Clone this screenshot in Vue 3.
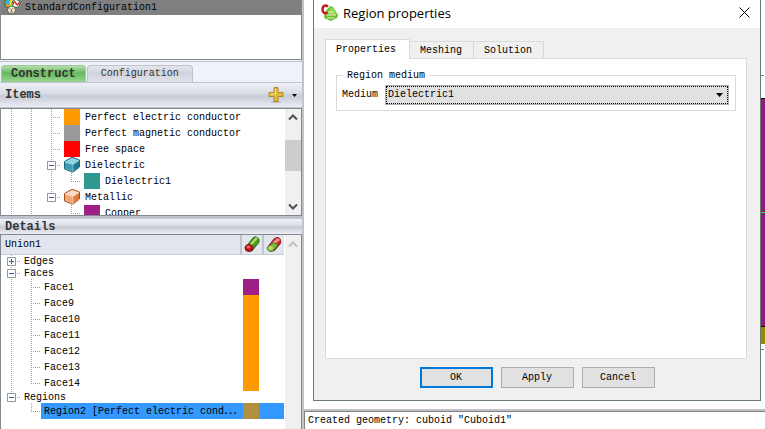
<script setup>
import { ref } from 'vue'

const medium = ref('Dielectric1')

const items = [
  { cells: ['v', 'v', 't'], color: '#ff9900', label: 'Perfect electric conductor' },
  { cells: ['v', 'v', 't'], color: '#999999', label: 'Perfect magnetic conductor' },
  { cells: ['v', 'v', 't'], color: '#ff0000', label: 'Free space' },
  { cells: ['v', 'v', 't'], toggle: '-', cube: 'teal', label: 'Dielectric' },
  { cells: ['v', 'v', 'v', 'l'], color: '#2f9990', label: 'Dielectric1' },
  { cells: ['v', 'v', 'l'], toggle: '-', cube: 'copper', label: 'Metallic' },
  { cells: ['v', 'v', 'n', 'l'], color: '#9e1f86', label: 'Copper' },
]

const details = [
  { cells: ['t'], toggle: '+', label: 'Edges', group: true },
  { cells: ['t'], toggle: '-', label: 'Faces', group: true },
  { cells: ['v', 't'], label: 'Face1', color: '#9e1f86' },
  { cells: ['v', 't'], label: 'Face9', color: '#ff9900' },
  { cells: ['v', 't'], label: 'Face10', color: '#ff9900' },
  { cells: ['v', 't'], label: 'Face11', color: '#ff9900' },
  { cells: ['v', 't'], label: 'Face12', color: '#ff9900' },
  { cells: ['v', 't'], label: 'Face13', color: '#ff9900' },
  { cells: ['v', 'l'], label: 'Face14', color: '#ff9900' },
  { cells: ['l'], toggle: '-', label: 'Regions', group: true },
  { cells: ['n', 'l'], label: 'Region2 [Perfect electric cond', more: true, color: '#b38f40', selected: true },
]
</script>

<template>
  <div class="app">
    <aside class="side">
      <div class="config-list">
        <div class="config-row">
          <svg class="config-icon" width="17" height="15" viewBox="0 0 17 15" aria-hidden="true">
            <path d="M1 0h8v8l-3 1-5-3z" fill="#e8a020" stroke="#2f6b33" />
            <path d="M2 0h3v5l-3-1z" fill="#38b5c8" />
            <path d="M6 0h3v6H6z" fill="#f5d83a" />
            <circle cx="12" cy="3.500" r="4" fill="#fff" stroke="#2e7038" />
            <path d="M9 4.500c1-4 2-3 3-1s2 2 3-1" fill="none" stroke="#d3202c" stroke-width="1.500" />
            <circle cx="7.500" cy="10" r="4" fill="#f7ede0" stroke="#3a6e3c" />
            <path d="M5.500 8l2 2 2-2M7.500 10v2M6 12h3" fill="none" stroke="#c55a48" />
          </svg>
          <span>StandardConfiguration1</span>
        </div>
      </div>

      <div class="side-tabs" role="tablist">
        <button class="side-tab active" role="tab" aria-selected="true">Construct</button>
        <button class="side-tab" role="tab" aria-selected="false">Configuration</button>
      </div>

      <header class="bar items-bar">
        <h2>Items</h2>
        <button class="add" aria-label="Add item">
          <svg width="32" height="18" viewBox="0 0 32 18">
            <ellipse cx="9" cy="16" rx="5" ry="1" fill="#a5a8b2" opacity=".6" />
            <path d="M7 1.500h4v5h5v4h-5v5H7v-5H2v-4h5z" fill="#dfb83e" stroke="#b18a2b" />
            <path d="M8.500 3v5H4" fill="none" stroke="#f7e394" />
            <path d="M25 8h5l-2.500 3z" fill="#000" />
          </svg>
        </button>
      </header>

      <section class="box items-box">
        <div class="tree">
          <div v-for="row in items" :key="row.label" class="row">
            <span v-for="(c, i) in row.cells" :key="i" class="cell" :class="c">
              <button v-if="row.toggle && i === row.cells.length - 1" class="toggle" :aria-label="row.label">
                <svg width="9" height="9" viewBox="0 0 9 9"><path d="M2 4.500h5" stroke="#3b5fae" /></svg>
              </button>
            </span>
            <span v-if="row.color" class="swatch lead" :style="{ background: row.color }"></span>
            <svg v-else class="lead" width="16" height="16" viewBox="0 0 16 16" :class="row.cube" aria-hidden="true">
              <path class="top" d="M.5 4.500L7 .8l2-.3 6.500 2.500v7L9.500 14.800l-1.500.2-7.500-3z" />
              <path class="front" d="M1 5l8 2.500v7l-8-3z" />
              <path class="edge" d="M9 7.500l6-4V10l-6 4.500z" />
              <path class="shine" d="M1 5l8 2.500 6-4M9 7.500v7" />
            </svg>
            <span class="label">{{ row.label }}</span>
          </div>
        </div>
        <div class="scroll">
          <svg width="16" height="16" viewBox="0 0 16 16"><path d="M4 10.500L8 6.500l4 4" /></svg>
          <span class="thumb"></span>
          <svg class="down" width="16" height="16" viewBox="0 0 16 16"><path d="M4 5.500l4 4 4-4" /></svg>
        </div>
      </section>

      <header class="bar details-bar"><h2>Details</h2></header>

      <section class="box details-box">
        <div class="tree">
          <div class="head">
            <span class="head-name">Union1</span>
            <span class="head-icon">
              <svg width="16" height="17" viewBox="0 0 16 17" aria-hidden="true">
                <path d="M1 12L9 2c2-2 4-1 5 0s1 2 1 4L8 15z" fill="#4f9a20" stroke="#2c6417" />
                <path d="M6 8l5-6c1-1 2-1 3 0L8 9z" fill="#b5de68" />
                <ellipse cx="5" cy="12" rx="4" ry="3.500" fill="#b81418" stroke="#7d1010" />
                <ellipse cx="4.500" cy="11" rx="2" ry="1.500" fill="#ee6a60" />
              </svg>
            </span>
            <span class="head-icon">
              <svg width="16" height="17" viewBox="0 0 16 17" aria-hidden="true">
                <path d="M1 12L8 3c2-2 5-2 6 0s1 3 0 5l-6 7z" fill="#c8232b" stroke="#8c181c" />
                <path d="M5 8l5-5c1-1 3-1 4 1L8 9z" fill="#f68b84" />
                <path d="M1 12l6-5c3 0 5 1 4 3l-4 5c-3 1-5 0-6-3z" fill="#7cba3c" stroke="#477f20" />
                <ellipse cx="4.500" cy="12" rx="2.500" ry="2" fill="#b5e26e" />
              </svg>
            </span>
          </div>
          <div
            v-for="row in details"
            :key="row.label"
            class="row"
            :class="{ group: row.group, selected: row.selected }"
          >
            <span v-for="(c, i) in row.cells" :key="i" class="cell" :class="c">
              <button v-if="row.toggle && i === row.cells.length - 1" class="toggle" :aria-label="row.label">
                <svg width="9" height="9" viewBox="0 0 9 9">
                  <path :d="row.toggle === '+' ? 'M2 4.5h5M4.5 2v5' : 'M2 4.5h5'" stroke="#3b5fae" />
                </svg>
              </button>
            </span>
            <span class="fill">
              <span class="name">{{ row.label }}<span v-if="row.more" class="more">…</span></span>
              <span v-if="row.color" class="swatch mark" :style="{ background: row.color }"></span>
            </span>
          </div>
        </div>
        <div class="scroll idle">
          <svg width="16" height="18" viewBox="0 0 16 18"><path d="M4 11.500L8 7.500l4 4" /></svg>
        </div>
      </section>
    </aside>

    <main class="main">
      <div class="stage">
        <section class="dialog" role="dialog" aria-labelledby="dialog-title">
          <header class="title">
            <svg width="18" height="18" viewBox="0 0 18 18" aria-hidden="true">
              <path d="M9 2l3 1 5 8-1 3-6 3-7-3 1-6z" fill="#68bd2d" />
              <path d="M9 3l3 1 4 7H7z" fill="#91d84d" />
              <path d="M7 8h6M5 11h10M6 14h8" stroke="#e7f7c9" stroke-width="1.200" />
              <path d="M7 2.500C4 .5 1.500 2 1.500 5.500S4 10 6.500 8.500" fill="none" stroke="#c8171e" stroke-width="2.500" />
            </svg>
            <h1 id="dialog-title">Region properties</h1>
            <button class="close" aria-label="Close">
              <svg width="11" height="11" viewBox="0 0 11 11"><path d="M.5.500l10 10M10.500.500l-10 10" /></svg>
            </button>
          </header>

          <div class="dialog-body">
            <div class="tabs" role="tablist">
              <button class="tab active" role="tab" aria-selected="true">Properties</button>
              <button class="tab" role="tab" aria-selected="false">Meshing</button>
              <button class="tab" role="tab" aria-selected="false">Solution</button>
            </div>
            <div class="pane">
              <fieldset>
                <legend>Region medium</legend>
                <label for="medium">Medium</label>
                <div class="combo">
                  <select id="medium" v-model="medium">
                    <option>Dielectric1</option>
                  </select>
                  <svg width="7" height="4" viewBox="0 0 7 4" aria-hidden="true"><path d="M0 0h7L3.500 4z" /></svg>
                </div>
              </fieldset>
            </div>
            <div class="actions">
              <button class="push default">OK</button>
              <button class="push">Apply</button>
              <button class="push">Cancel</button>
            </div>
          </div>
        </section>
        <div class="view">
          <span class="tick upper"></span>
          <span class="solid"></span>
          <span class="solid low"></span>
          <span class="base"></span>
          <span class="tick"></span>
        </div>
      </div>
      <div class="log">Created geometry: cuboid "Cuboid1"</div>
    </main>
  </div>
</template>

<style>
body {
  margin: 0;
}
</style>

<style scoped>
* {
  box-sizing: border-box;
}
.app {
  display: flex;
  min-height: 100vh;
  font: 10px/16px "Liberation Mono", monospace;
  color: #000;
  background: #fff;
}
button,
select {
  font: inherit;
  color: inherit;
  margin: 0;
  padding: 0;
  border: 0;
  border-radius: 0;
  background: none;
}
svg {
  display: block;
  flex: none;
}
h1,
h2 {
  margin: 0;
}

/* side panel */
.side {
  flex: none;
  width: 304px;
  display: flex;
  flex-direction: column;
  background: #eff2fb;
  border-right: 2px solid #c0c3cb;
}
.config-list {
  height: 60px;
  background: #fff;
  border: 1px solid #828790;
  border-top: 0;
}
.config-row {
  display: flex;
  height: 15px;
  padding-left: 3px;
  gap: 4px;
  background: #808080;
}
.side-tabs {
  display: flex;
  gap: 1px;
  margin-top: 1px;
  padding: 3px 1px 0;
  border-top: 1px solid #c0c3cb;
  border-bottom: 1px solid #c0c3cb;
}
.side-tab {
  height: 17px;
  padding: 0 13px;
  color: #333;
  border: 1px solid #bfc2cb;
  border-bottom: 0;
  border-radius: 4px 4px 0 0;
  background: linear-gradient(#e5e7ef, #d0d3dc 45%, #e0e3eb);
}
.side-tab.active {
  padding: 0 9px;
  font-size: 12px;
  font-weight: bold;
  border-color: #9fca98;
  background: linear-gradient(#b4deae, #66b95d 45%, #9cd492);
}
.bar {
  display: flex;
  align-items: center;
  justify-content: space-between;
  padding: 0 3px 0 5px;
  background: linear-gradient(#eef0f7, #dcdee6 40%, #c8cbd5 55%, #eceef5);
}
.bar h2 {
  font-size: 12px;
  line-height: 14px;
  color: #333;
}
.items-bar {
  height: 25px;
  border-bottom: 1px solid #c0c3cb;
}
.details-bar {
  height: 18px;
  border-top: 3px solid #c0c3cb;
}
.box {
  display: flex;
  background: #fff;
  border: 1px solid #828790;
}
.items-box {
  height: 108px;
}
.details-box {
  flex: 1;
  border-bottom: 0;
}
.tree {
  flex: 1;
  min-width: 0;
  overflow: hidden;
}
.row {
  display: flex;
  height: 16px;
  line-height: 18px;
  white-space: pre;
}
.row.group {
  height: 12px;
  line-height: 14px;
}
.cell {
  flex: none;
  display: flex;
  align-items: center;
  width: 20px;
  padding-left: 6px;
  --v: repeating-linear-gradient(#a0a0a0 0 1px, transparent 1px 2px);
  --h: repeating-linear-gradient(90deg, #a0a0a0 0 1px, transparent 1px 2px);
  background-repeat: no-repeat;
}
.v {
  background-image: var(--v);
  background-size: 1px 100%;
  background-position: 10px 0;
}
.t {
  background-image: var(--v), var(--h);
  background-size: 1px 100%, 10px 1px;
  background-position: 10px 0, 10px 50%;
}
.l {
  background-image: var(--v), var(--h);
  background-size: 1px 50%, 10px 1px;
  background-position: 10px 0, 10px 50%;
}
.toggle {
  width: 9px;
  height: 9px;
  border-radius: 1px;
  background: #fff;
  box-shadow: inset 0 0 0 1px #969696;
}
.swatch {
  flex: none;
  width: 16px;
  height: 16px;
}
.lead {
  margin-left: 3px;
}
.label {
  padding-left: 5px;
}
.teal .top { fill: #8fd3df; stroke: #19677b; }
.teal .front { fill: #3c9cb2; }
.teal .edge { fill: #1c7790; }
.copper .top { fill: #fbdcc6; stroke: #a84d1c; }
.copper .front { fill: #f1a678; }
.copper .edge { fill: #e2783c; }
.shine { fill: none; stroke: #fff; stroke-opacity: .4; }

.scroll {
  flex: none;
  display: flex;
  flex-direction: column;
  width: 16px;
  background: #f0f0f0;
}
.scroll path {
  fill: none;
  stroke: #505050;
  stroke-width: 2;
}
.scroll.idle path {
  stroke: #bfbfbf;
}
.thumb {
  height: 31px;
  margin-top: 15px;
  background: #cdcdcd;
}
.down {
  margin-top: auto;
}

.head {
  display: flex;
  height: 20px;
  margin-right: 1px;
  background: #e1e5ed;
  line-height: 20px;
  border-bottom: 1px solid #c8ccd4;
}
.head-name {
  flex: 1;
  padding-left: 4px;
}
.head-icon {
  display: flex;
  align-items: center;
  justify-content: center;
  width: 22px;
  border-left: 2px solid #c0c3cb;
}
.fill {
  flex: 1;
  min-width: 0;
  display: flex;
  justify-content: space-between;
  margin-right: 1px;
  padding-left: 3px;
}
.more {
  font-family: "Noto Sans CJK SC", sans-serif;
  font-size: 12px;
  line-height: 12px;
}
.mark {
  margin-right: 25px;
}
.selected .fill {
  background: #3399ff;
}

/* work area */
.main {
  flex: 1;
  min-width: 0;
  display: flex;
  flex-direction: column;
}
.stage {
  flex: 1;
  display: flex;
  padding: 0 0 10px 9px;
}
.dialog {
  flex: 1;
  display: flex;
  flex-direction: column;
  border: 1px solid #6c7a74;
  border-top: 0;
  background: #f0f0f0;
}
.title {
  display: flex;
  align-items: center;
  height: 28px;
  padding: 0 10px 3px 7px;
  gap: 4px;
  background: #fff;
}
.title h1 {
  flex: 1;
  font: 13px/20px "Open Sans", sans-serif;
}
.close path {
  stroke: #000;
}
.dialog-body {
  flex: 1;
  display: flex;
  flex-direction: column;
  padding: 11px 13px 12px 11px;
}
.tabs {
  display: flex;
  align-items: flex-end;
  height: 19px;
}
.tab {
  height: 17px;
  padding: 0 11px 0 10px;
  line-height: 18px;
  border: 1px solid #dadada;
  border-width: 1px 1px 0 0;
}
.tab.active {
  position: relative;
  height: 20px;
  margin-bottom: -1px;
  padding: 0 13px 0 10px;
  border-left-width: 1px;
  background: #fff;
}
.pane {
  flex: 1;
  padding: 10px;
  border: 1px solid #dadada;
  background: #fff;
}
fieldset {
  display: flex;
  align-items: center;
  gap: 7px;
  min-width: 0;
  margin: 0;
  padding: 4px 6px 5px 5px;
  border: 1px solid #dadada;
}
legend {
  padding: 0 4px;
  margin-left: 1px;
  line-height: 14px;
  height: 12px;
}
.combo {
  flex: 1;
  display: flex;
  align-items: center;
  position: relative;
}
.combo select {
  flex: 1;
  height: 20px;
  padding: 0 16px 0 2px;
  appearance: none;
  border: 1px solid #adadad;
  background: #e1e1e1;
  outline: 1px dotted #000;
  outline-offset: -2px;
}
.combo svg {
  position: absolute;
  right: 6px;
  pointer-events: none;
}
.actions {
  display: flex;
  justify-content: center;
  gap: 8px;
  padding: 8px 0 0 2px;
}
.push {
  width: 73px;
  height: 21px;
  border: 1px solid #adadad;
  background: #e1e1e1;
}
.push.default {
  border: 2px solid #0078d7;
}

.view {
  display: flex;
  flex-direction: column;
  width: 4px;
}
.tick {
  width: 3px;
  height: 1px;
  margin-top: 5px;
  background: #808080;
}
.tick.upper {
  margin: 75px 0 22px;
}
.solid {
  height: 115px;
  background: #8e1a79;
  border-top: 1px solid #000;
  border-bottom: 1px solid #00ff00;
}
.solid.low {
  height: 114px;
  border-top: 0;
  border-bottom-color: #000;
}
.base {
  height: 17px;
  background: #8f8f00;
}
.log {
  height: 18px;
  padding-left: 3px;
  line-height: 18px;
  border-left: 1px solid #808080;
  border-top: 1px solid #808080;
  box-shadow: 0 -2px #c0c4c8;
}
</style>
